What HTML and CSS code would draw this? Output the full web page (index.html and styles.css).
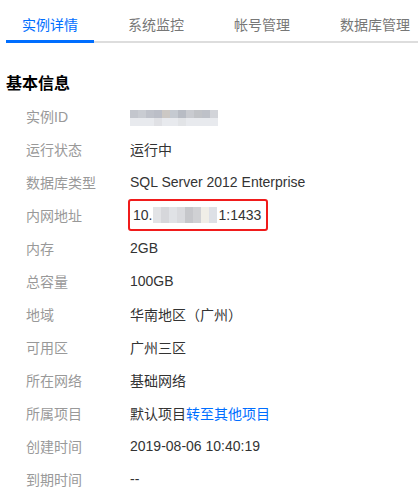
FILE: index.html
```html
<!DOCTYPE html>
<html lang="zh-CN">
<head>
  <meta charset="UTF-8" />
  <title>实例详情</title>
  <link rel="stylesheet" href="styles.css">
</head>
<body>
  <div class="tabs">
    <a class="tab active" href="#">实例详情</a>
    <a class="tab" href="#">系统监控</a>
    <a class="tab" href="#">帐号管理</a>
    <a class="tab" href="#">数据库管理</a>
  </div>

  <div class="section">
    <h3>基本信息</h3>
    <ul class="info">
      <li>
        <span class="label">实例ID</span>
        <span class="value"><span class="mosaic id-mosaic"><i></i><i></i><i></i><i></i><i></i><i></i><i></i><i></i><i></i><i></i><i></i><i></i><i></i><i></i><i></i><i></i><i></i><i></i><i></i><i></i><i></i><i></i></span></span>
      </li>
      <li><span class="label">运行状态</span><span class="value">运行中</span></li>
      <li><span class="label">数据库类型</span><span class="value">SQL Server 2012 Enterprise</span></li>
      <li>
        <span class="label">内网地址</span>
        <span class="value"><span class="highlight">10.<span class="mosaic ip-mosaic"><i></i><i></i><i></i><i></i><i></i><i></i><i></i><i></i></span>1:1433</span></span>
      </li>
      <li><span class="label">内存</span><span class="value">2GB</span></li>
      <li><span class="label">总容量</span><span class="value">100GB</span></li>
      <li><span class="label">地域</span><span class="value">华南地区（广州）</span></li>
      <li><span class="label">可用区</span><span class="value">广州三区</span></li>
      <li><span class="label">所在网络</span><span class="value">基础网络</span></li>
      <li><span class="label">所属项目</span><span class="value">默认项目<a href="#" class="link">转至其他项目</a></span></li>
      <li><span class="label">创建时间</span><span class="value">2019-08-06 10:40:19</span></li>
      <li><span class="label">到期时间</span><span class="value">--</span></li>
    </ul>
  </div>
</body>
</html>
```

FILE: styles.css
```css
* {
  box-sizing: border-box;
  margin: 0;
  padding: 0;
}

body {
  background-color: #fff;
  font-family: "Liberation Sans", "Noto Sans CJK SC", sans-serif;
  font-size: 14px;
  color: #333;
  padding-left: 6px;
  overflow: hidden;
}

.tabs {
  display: flex;
  gap: 18px;
  margin-top: 15px;
  border-bottom: 2px solid #ddd;
  white-space: nowrap;
}

.tab {
  display: block;
  padding: 0 16px;
  height: 28px;
  line-height: 20px;
  color: #777;
  text-decoration: none;
  font-size: 14px;
  margin-bottom: -2px;
  border-bottom: 3px solid transparent;
}

.tab.active {
  color: #006eff;
  border-bottom-color: #006eff;
}

.section h3 {
  font-size: 16px;
  font-weight: bold;
  color: #000;
  line-height: 22px;
  margin-top: 30px;
}

.info {
  list-style: none;
  margin-top: 4px;
  padding-left: 20px;
}

.info li {
  display: flex;
  align-items: center;
  height: 33px;
}

.label {
  width: 104px;
  color: #999;
}

.value {
  color: #333;
}

.link {
  color: #006eff;
  text-decoration: none;
}

.highlight {
  display: inline-flex;
  align-items: center;
  height: 32px;
  margin-left: -2px;
  padding: 0 5px 0 3px;
  border: 2px solid #f01b1b;
  border-radius: 3px;
}

.mosaic {
  display: inline-grid;
  grid-auto-flow: column;
}

.mosaic i {
  display: block;
}

.id-mosaic {
  grid-template-rows: 8px 8px;
  grid-auto-columns: 8px;
  width: 89px;
}

.id-mosaic i:nth-child(odd) { background: #c3c6cd; }
.id-mosaic i:nth-child(even) { background: #e8eaee; }
.id-mosaic i:nth-child(3) { background: #c9ccd2; }
.id-mosaic i:nth-child(5) { background: #bfc2ca; }
.id-mosaic i:nth-child(7) { background: #bbbec7; }
.id-mosaic i:nth-child(9) { background: #ccc8c4; }
.id-mosaic i:nth-child(11) { background: #c5cad1; }
.id-mosaic i:nth-child(13) { background: #b8bcc4; }
.id-mosaic i:nth-child(15) { background: #c9cbd0; }
.id-mosaic i:nth-child(17) { background: #c1c3c7; }
.id-mosaic i:nth-child(19) { background: #bec1c8; }
.id-mosaic i:nth-child(21) { background: #d2d4d9; }
.id-mosaic i:nth-child(8) { background: #e0e1e5; }
.id-mosaic i:nth-child(14) { background: #e2e4e7; }

.ip-mosaic {
  grid-template-rows: 16px;
  grid-auto-columns: 8px;
  margin: 0 1px;
}

.ip-mosaic i:nth-child(1) { background: #e2e3e6; }
.ip-mosaic i:nth-child(2) { background: #d6d7db; }
.ip-mosaic i:nth-child(3) { background: #e0e2e6; }
.ip-mosaic i:nth-child(4) { background: #d9dade; }
.ip-mosaic i:nth-child(5) { background: #c6c7cb; }
.ip-mosaic i:nth-child(6) { background: #d0d1d4; }
.ip-mosaic i:nth-child(7) { background: #f0eee7; }
.ip-mosaic i:nth-child(8) { background: #dde0e6; }
```
